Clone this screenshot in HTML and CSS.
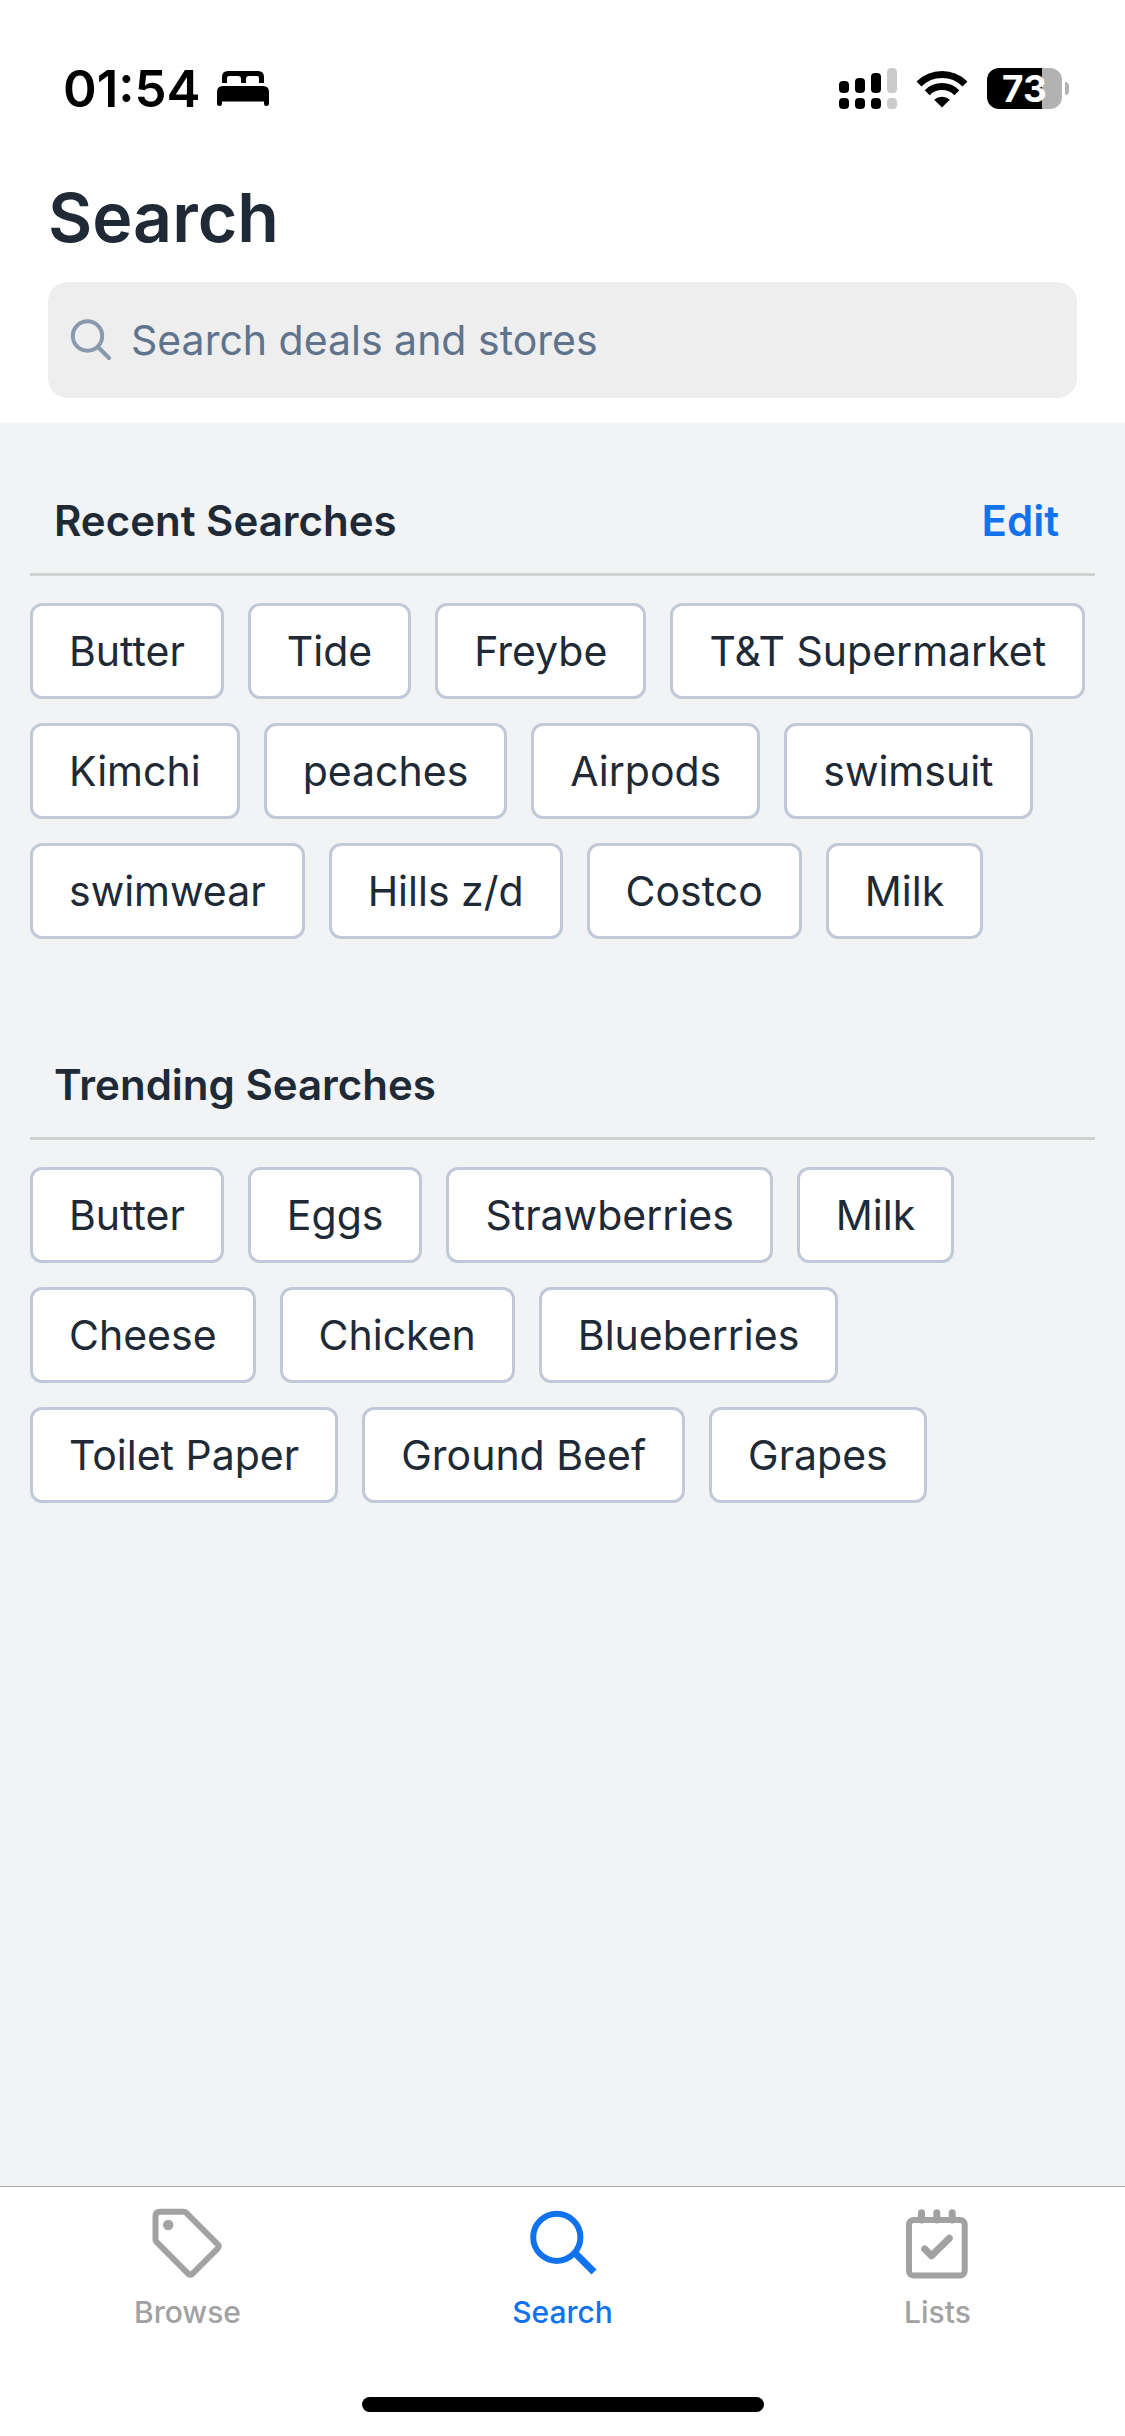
FILE: index.html
```
<!DOCTYPE html>
<html lang="en">
<head>
  <meta charset="UTF-8" />
  <meta name="viewport" content="width=device-width, initial-scale=1.0" />
  <title>Search</title>
  <link rel="stylesheet" href="styles.css">
</head>
<body>
  <header>
    <div class="status-bar">
      <div class="status-left">
        <span class="time">01:54</span>
        <svg width="52" height="36" viewBox="0 0 52 36" aria-hidden="true">
          <path d="M5 12V6q0-6 6-6h30q6 0 6 6v6h-5V7q0-2-2-2h-8q-3 0-3 3v4h-5V8q0-3-3-3h-9q-2 0-2 2v5z" />
          <path d="M0 33V21q0-6 6-6h40q6 0 6 6v12q0 2-2.500 2t-2.500-2v-2.500H5V33q0 2-2.500 2T0 33z" />
        </svg>
      </div>
      <div class="status-right">
        <svg width="58" height="42" viewBox="0 0 58 42" aria-hidden="true">
          <rect x="0" y="13" width="10" height="12" rx="4" />
          <rect x="16" y="10" width="10" height="15" rx="4" />
          <rect x="32" y="5" width="10" height="20" rx="4" />
          <rect class="off" x="48" y="0" width="10" height="25" rx="4" />
          <rect x="0" y="30" width="10" height="11" rx="4" />
          <rect x="16" y="30" width="10" height="11" rx="4" />
          <rect x="32" y="30" width="10" height="11" rx="4" />
          <rect class="off" x="48" y="30" width="10" height="11" rx="4" />
        </svg>
        <svg width="52" height="38" viewBox="0 0 52 38" aria-hidden="true">
          <path class="wave" d="M3 14a32.600 32.600 0 0 1 46 0M11.200 22.700a21 21 0 0 1 29.600 0" />
          <path d="M26 37.500l-7.800-7.800a11.500 11.500 0 0 1 15.600 0z" />
        </svg>
        <span class="battery">73</span>
      </div>
    </div>

    <h1>Search</h1>
    <label class="search-box">
      <svg width="42" height="42" viewBox="0 0 42 42" aria-hidden="true">
        <circle cx="17.500" cy="17" r="14.700" />
        <path d="M28 28l11 11" />
      </svg>
      <input type="search" placeholder="Search deals and stores" aria-label="Search deals and stores">
    </label>
  </header>

  <main>
    <section>
      <div class="section-head">
        <h2>Recent Searches</h2>
        <button class="edit">Edit</button>
      </div>
      <div class="chips">
        <button>Butter</button>
        <button>Tide</button>
        <button>Freybe</button>
        <button>T&amp;T Supermarket</button>
        <button>Kimchi</button>
        <button>peaches</button>
        <button>Airpods</button>
        <button>swimsuit</button>
        <button>swimwear</button>
        <button>Hills z/d</button>
        <button>Costco</button>
        <button>Milk</button>
      </div>
    </section>

    <section>
      <div class="section-head">
        <h2>Trending Searches</h2>
      </div>
      <div class="chips">
        <button>Butter</button>
        <button>Eggs</button>
        <button>Strawberries</button>
        <button>Milk</button>
        <button>Cheese</button>
        <button>Chicken</button>
        <button>Blueberries</button>
        <button>Toilet Paper</button>
        <button>Ground Beef</button>
        <button>Grapes</button>
      </div>
    </section>
  </main>

  <footer>
    <nav>
      <a href="#browse">
        <svg width="72" height="72" viewBox="0 0 72 72" aria-hidden="true">
          <path d="M8 3.700h23.500q1.600 0 2.800 1.100l31.500 31.500q2 2 0 4l-25.500 25.500q-2 2-4 0L4.700 34.200q-1.200-1.200-1.200-2.800V8.200q0-4.500 4.500-4.500z" />
          <circle class="dot" cx="16.200" cy="17" r="5.200" />
        </svg>
        Browse
      </a>
      <a href="#search" class="active">
        <svg width="72" height="72" viewBox="0 0 72 72" aria-hidden="true">
          <circle cx="29.800" cy="29.300" r="23.600" />
          <path class="handle" d="M46.500 43.500L67 64" />
        </svg>
        Search
      </a>
      <a href="#lists">
        <svg width="72" height="72" viewBox="0 0 72 72" aria-hidden="true">
          <rect x="7" y="12" width="55.700" height="55.500" rx="4.500" />
          <path class="pegs" d="M19.500 4.700V12M34.800 4.700V12M50.200 4.700V12" />
          <path class="check" d="M22.700 41l6.800 6.800L47.300 30.300" />
        </svg>
        Lists
      </a>
    </nav>
    <div class="home-bar"></div>
  </footer>
</body>
</html>
```
FILE: styles.css
```
* {
  box-sizing: border-box;
}
body {
  margin: 0;
  min-height: 100vh;
  display: flex;
  flex-direction: column;
  font-family: Inter, "Liberation Sans", sans-serif;
  font-size: 41px;
  line-height: 48px;
  color: #202a36;
  background: #f1f3f5;
}
button {
  font: inherit;
  color: inherit;
  cursor: pointer;
}
h1, h2 {
  margin: 0;
  font-weight: 600;
}
header {
  background: white;
  padding: 0 48px 25px;
}

/* status bar */
.status-bar {
  height: 177px;
  display: flex;
  align-items: center;
  justify-content: space-between;
  padding: 0 15px;
  color: black;
}
.status-left {
  display: flex;
  align-items: center;
  gap: 16px;
}
.status-right {
  display: flex;
  align-items: center;
  gap: 19px;
}
.time {
  font-size: 51px;
  font-weight: 600;
}
.off {
  fill: #cbcbcb;
}
.wave {
  fill: none;
  stroke: black;
  stroke-width: 7;
}
.battery {
  position: relative;
  width: 75px;
  height: 41px;
  border-radius: 12px;
  background: linear-gradient(to right, black 73%, #b2b2b2 73%);
  color: white;
  font-size: 37px;
  font-weight: 700;
  line-height: 41px;
  text-align: center;
}
.battery::after {
  content: "";
  position: absolute;
  top: 14px;
  right: -7px;
  width: 4px;
  height: 13px;
  border-radius: 0 4px 4px 0;
  background: #b2b2b2;
}

h1 {
  font-size: 68px;
  line-height: 80px;
}
.search-box {
  display: flex;
  align-items: center;
  gap: 19px;
  height: 116px;
  margin-top: 25px;
  padding: 0 22px;
  border-radius: 20px;
  background: #eee;
}
.search-box svg {
  flex: none;
  fill: none;
  stroke: #8999b0;
  stroke-width: 4;
  stroke-linecap: round;
}
.search-box input {
  flex: 1;
  min-width: 0;
  padding: 0;
  border: none;
  outline: none;
  background: transparent;
  font: inherit;
  color: inherit;
}
.search-box input::placeholder {
  color: #5f738c;
  opacity: 1;
}

main {
  flex: 1;
  padding: 0 30px;
}
section {
  padding-top: 74px;
}
section + section {
  margin-top: 48px;
}
.section-head {
  display: flex;
  justify-content: space-between;
  padding: 0 36px 28px 24px;
  border-bottom: 3px solid #d0d2d2;
  font-size: 42px;
}
h2 {
  font-size: 42px;
}
.edit {
  padding: 0;
  border: none;
  background: none;
  color: #1172ed;
  font-weight: 600;
}
.chips {
  display: flex;
  flex-wrap: wrap;
  gap: 24px;
  margin-top: 27px;
}
.chips button {
  height: 96px;
  padding: 0 36px;
  border: 3px solid #c1c9d8;
  border-radius: 12px;
  background: white;
}

/* bottom tabs */
footer {
  background: white;
  border-top: 1px solid #a7a7a7;
  padding: 21px 0 24px;
}
nav {
  display: grid;
  grid-template-columns: repeat(3, 1fr);
}
nav a {
  display: flex;
  flex-direction: column;
  align-items: center;
  gap: 14px;
  color: #a2a2a2;
  font-size: 30px;
  font-weight: 500;
  line-height: 36px;
  text-decoration: none;
}
nav svg {
  fill: none;
  stroke: currentColor;
  stroke-width: 6;
}
nav .active {
  color: #1172ed;
}
.dot {
  fill: currentColor;
  stroke: none;
}
.handle {
  stroke-width: 7;
}
.pegs {
  stroke-width: 7;
  stroke-linecap: round;
}
.check {
  stroke-width: 7;
  stroke-linecap: round;
  stroke-linejoin: round;
}
.home-bar {
  width: 402px;
  height: 15px;
  margin: 67px auto 0;
  border-radius: 8px;
  background: black;
}
```
